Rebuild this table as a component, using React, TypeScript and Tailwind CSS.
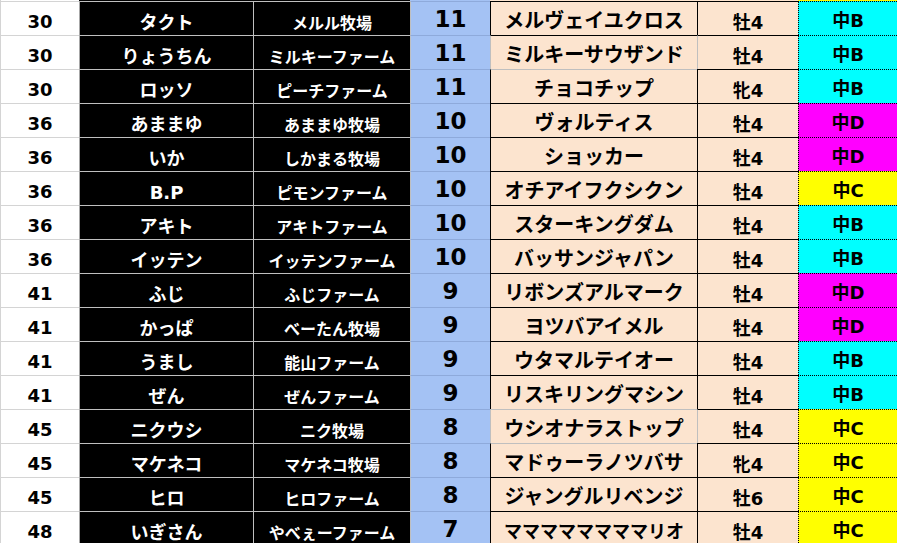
const rows = [
  { rank: "30", name: "タクト", farm: "メルル牧場", num: "11", horse: "メルヴェイユクロス", sex: "牡4", grade: "B" },
  { rank: "30", name: "りょうちん", farm: "ミルキーファーム", num: "11", horse: "ミルキーサウザンド", sex: "牡4", grade: "B", plain: true },
  { rank: "30", name: "ロッソ", farm: "ピーチファーム", num: "11", horse: "チョコチップ", sex: "牝4", grade: "B", greyTop: true },
  { rank: "36", name: "あままゆ", farm: "あままゆ牧場", num: "10", horse: "ヴォルティス", sex: "牡4", grade: "D" },
  { rank: "36", name: "いか", farm: "しかまる牧場", num: "10", horse: "ショッカー", sex: "牡4", grade: "D" },
  { rank: "36", name: "B.P", farm: "ピモンファーム", num: "10", horse: "オチアイフクシクン", sex: "牡4", grade: "C" },
  { rank: "36", name: "アキト", farm: "アキトファーム", num: "10", horse: "スターキングダム", sex: "牡4", grade: "B" },
  { rank: "36", name: "イッテン", farm: "イッテンファーム", num: "10", horse: "バッサンジャパン", sex: "牡4", grade: "B" },
  { rank: "41", name: "ふじ", farm: "ふじファーム", num: "9", horse: "リボンズアルマーク", sex: "牡4", grade: "D" },
  { rank: "41", name: "かっぱ", farm: "べーたん牧場", num: "9", horse: "ヨツバアイメル", sex: "牡4", grade: "D" },
  { rank: "41", name: "うまし", farm: "能山ファーム", num: "9", horse: "ウタマルテイオー", sex: "牡4", grade: "B" },
  { rank: "41", name: "ぜん", farm: "ぜんファーム", num: "9", horse: "リスキリングマシン", sex: "牡4", grade: "B" },
  { rank: "45", name: "ニクウシ", farm: "ニク牧場", num: "8", horse: "ウシオナラストップ", sex: "牡4", grade: "C", plain: true, greyTop: true },
  { rank: "45", name: "マケネコ", farm: "マケネコ牧場", num: "8", horse: "マドゥーラノツバサ", sex: "牝4", grade: "C", greyTop: true },
  { rank: "45", name: "ヒロ", farm: "ヒロファーム", num: "8", horse: "ジャングルリベンジ", sex: "牡6", grade: "C" },
  { rank: "48", name: "いぎさん", farm: "やべぇーファーム", num: "7", horse: "ママママママママリオ", sex: "牡4", grade: "C", small: true },
];

const gradeBg: Record<string, string> = {
  B: "bg-[#00ffff]",
  C: "bg-[#ffff00]",
  D: "bg-[#ff00ff]",
};

// excel-ish cell: text sits near the bottom edge
const cell = "flex items-end justify-center leading-none whitespace-nowrap border-l border-t";

export default function App() {
  return (
    <div
      className="w-[897px] h-[543px] overflow-hidden bg-white font-bold text-black"
      style={{ fontFamily: '"DejaVu Sans", "Noto Sans CJK JP", sans-serif' }}
    >
      <div className="flex h-[1px]">
        <div className="w-[79px] border-l border-[#d4d4d4]" />
        <div className="w-[174px] bg-black" />
        <div className="w-[157px] bg-black" />
        <div className="w-[80px] bg-[#a4c2f4]" />
        <div className="w-[207px] bg-[#fce4cf]" />
        <div className="w-[101px] bg-[#fce4cf]" />
        <div className="w-[99px] bg-[#ffff00]" />
      </div>
      {rows.map((r, i) => (
        <div key={i} className="flex h-[34px]">
          <div className={`${cell} w-[79px] border-[#d4d4d4] pb-[4px] text-[18px]`}>{r.rank}</div>
          <div className={`${cell} w-[174px] bg-black border-t-[#bfbfbf] border-l-[#a6a6a6] pb-[3px] text-[18px] text-white`}>
            {r.name}
          </div>
          <div className={`${cell} w-[157px] bg-black border-[#bfbfbf] pb-[3px] text-[16px] text-white`}>{r.farm}</div>
          <div className={`${cell} w-[80px] bg-[#a4c2f4] border-l-[#bfbfbf] border-t-[#8eaadb] pb-[4px] text-[23px]`}>
            {r.num}
          </div>
          <div
            className={`${cell} w-[207px] bg-[#fce4cf] pb-[4px] ${r.small ? "text-[18px]" : "text-[20px]"} ${
              r.plain ? "border-l-[#bfbfbf]" : "border-l-black border-l-dotted"
            } ${r.greyTop ? "border-t-[#bfbfbf]" : "border-t-black border-t-dotted"}`}
          >
            {r.horse}
          </div>
          <div
            className={`${cell} w-[101px] bg-[#fce4cf] pb-[3px] text-[18px] border-t-black border-t-dotted ${
              r.plain ? "border-l-[#bfbfbf]" : "border-l-black border-l-dotted"
            }`}
          >
            {r.sex}
          </div>
          <div className={`${cell} w-[99px] ${gradeBg[r.grade]} border-black border-dotted pb-[5px] text-[18px]`}>
            中{r.grade}
          </div>
        </div>
      ))}
    </div>
  );
}
